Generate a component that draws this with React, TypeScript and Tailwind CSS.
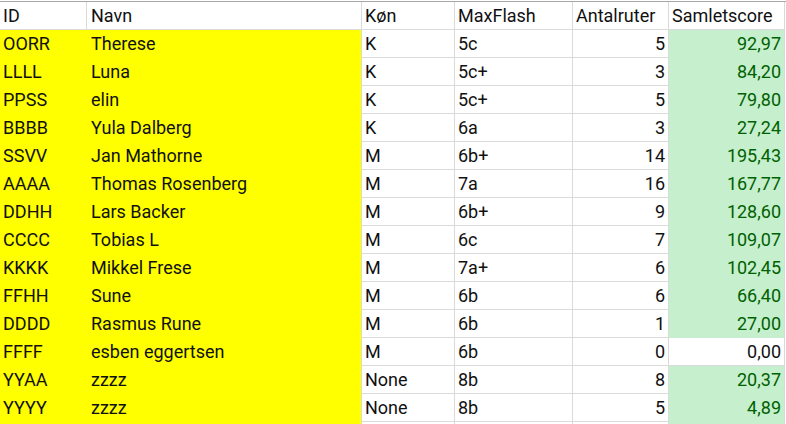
import React from "react";

type Row = [string, string, string, string, string, string, boolean];

const rows: Row[] = [
  ["OORR", "Therese", "K", "5c", "5", "92,97", true],
  ["LLLL", "Luna", "K", "5c+", "3", "84,20", true],
  ["PPSS", "elin", "K", "5c+", "5", "79,80", true],
  ["BBBB", "Yula Dalberg", "K", "6a", "3", "27,24", true],
  ["SSVV", "Jan Mathorne", "M", "6b+", "14", "195,43", true],
  ["AAAA", "Thomas Rosenberg", "M", "7a", "16", "167,77", true],
  ["DDHH", "Lars Backer", "M", "6b+", "9", "128,60", true],
  ["CCCC", "Tobias L", "M", "6c", "7", "109,07", true],
  ["KKKK", "Mikkel Frese", "M", "7a+", "6", "102,45", true],
  ["FFHH", "Sune", "M", "6b", "6", "66,40", true],
  ["DDDD", "Rasmus Rune", "M", "6b", "1", "27,00", true],
  ["FFFF", "esben eggertsen", "M", "6b", "0", "0,00", false],
  ["YYAA", "zzzz", "None", "8b", "8", "20,37", true],
  ["YYYY", "zzzz", "None", "8b", "5", "4,89", true],
  ["", "", "", "", "", "", true],
];

const cols = "grid-cols-[87px_275px_93px_118px_96px_116px]";
const cell = "h-[28px] flex items-center border-b border-r border-[#dadada] whitespace-nowrap overflow-hidden";

export default function App() {
  return (
    <div
      className="w-[786px] h-[424px] overflow-hidden bg-white text-[18px] text-[#111]"
      style={{ fontFamily: "Roboto, 'Liberation Sans', sans-serif" }}
    >
      <div className="h-px bg-white" />
      <div className="border-t border-[#a8a8a8] w-[786px]">
        <div className={`grid ${cols}`}>
          <div className={`${cell} pl-[3px]`}>ID</div>
          <div className={`${cell} pl-[4px]`}>Navn</div>
          <div className={`${cell} pl-[3px]`}>Køn</div>
          <div className={`${cell} pl-[3px]`}>MaxFlash</div>
          <div className={`${cell} pl-[3px]`}>Antalruter</div>
          <div className={`${cell} pl-[3px]`}>Samletscore</div>
          {rows.map((r, i) => (
            <React.Fragment key={i}>
              <div className={`${cell} pl-[3px] bg-[#ffff00] border-[#ffff00]`}>{r[0]}</div>
              <div className={`${cell} pl-[4px] bg-[#ffff00] border-b-[#ffff00]`}>{r[1]}</div>
              <div className={`${cell} pl-[3px]`}>{r[2]}</div>
              <div className={`${cell} pl-[3px]`}>{r[3]}</div>
              <div className={`${cell} justify-end pr-[3px]`}>{r[4]}</div>
              {r[6] ? (
                <div className={`${cell} justify-end pr-[3px] bg-[#c6efce] border-b-[#c6efce] text-[#006100]`}>{r[5]}</div>
              ) : (
                <div className={`${cell} justify-end pr-[3px]`}>{r[5]}</div>
              )}
            </React.Fragment>
          ))}
        </div>
      </div>
    </div>
  );
}
